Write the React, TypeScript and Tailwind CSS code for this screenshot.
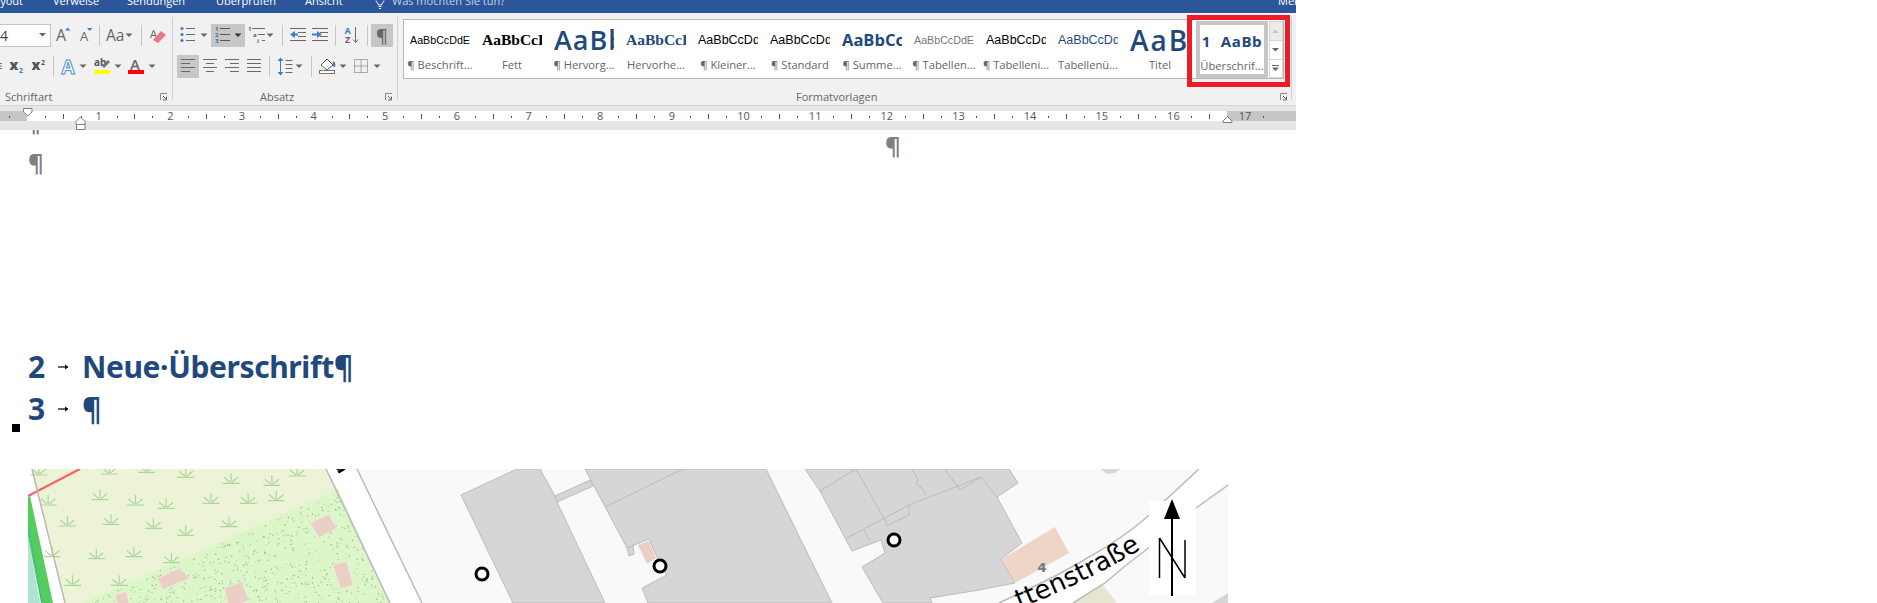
import React from "react";

const GRAY = "#666666";
const BLUE = "#3f7fc1";

function Caret({ x, y = 9.5, c = GRAY }: { x: number; y?: number; c?: string }) {
  return <path d={`M${x - 3.5} ${y}h7l-3.5 3.5z`} fill={c} />;
}

function Ico({ w, children }: { w: number; children?: React.ReactNode }) {
  return (
    <svg width={w} height={23} viewBox={`0 0 ${w} 23`} className="shrink-0 block">
      {children}
    </svg>
  );
}

function Sep() {
  return (
    <div className="w-px h-full flex items-center shrink-0">
      <div className="w-px h-[21px] bg-[#c6c6c6]" />
    </div>
  );
}

function Lines({ rows }: { rows: [number, number][] }) {
  return (
    <g stroke="#6a6a6a" strokeWidth="1">
      {rows.map(([a, b], i) => (
        <path key={i} d={`M${a} ${4.5 + i * 4}H${b}`} />
      ))}
    </g>
  );
}

function Launcher() {
  return (
    <svg width="8" height="8" viewBox="0 0 8 8" className="block shrink-0">
      <path d="M.5 7V.5H7" fill="none" stroke="#8a8a8a" />
      <path d="M3 3l3.5 3.5M6.5 3.5v3.5H3" fill="none" stroke="#666" />
    </svg>
  );
}

function Group({ w, label, pl, pr, children }: { w: string; label: string; pl: string; pr: string; children: React.ReactNode }) {
  return (
    <div className={`${w} shrink-0 flex flex-col`}>
      {children}
      <div className={`h-[17px] flex items-center ${pl} ${pr} text-[11px] leading-[17px] text-[#666666]`}>
        <span>{label}</span>
        <span className="ml-auto">
          <Launcher />
        </span>
      </div>
    </div>
  );
}

const tiles = [
  { p: "AaBbCcDdE", l: "¶ Beschrift...", c: "font-['Liberation_Sans',sans-serif] text-[10.7px] text-black" },
  { p: "AaBbCcDdE", l: "Fett", c: "font-['Liberation_Serif',serif] font-bold text-[15.5px] text-black" },
  { p: "AaBbCc", l: "¶ Hervorg...", c: "font-['Open_Sans',sans-serif] font-semibold text-[27px] tracking-[1px] text-[#1f497d]" },
  { p: "AaBbCcDdE", l: "Hervorhe...", c: "font-['Liberation_Serif',serif] font-bold text-[15.5px] text-[#1f497d]" },
  { p: "AaBbCcDdE", l: "¶ Kleiner...", c: "font-['Liberation_Sans',sans-serif] text-[12.5px] text-black" },
  { p: "AaBbCcDdE", l: "¶ Standard", c: "font-['Liberation_Sans',sans-serif] text-[12.5px] text-black" },
  { p: "AaBbCcDdE", l: "¶ Summe...", c: "font-['Open_Sans',sans-serif] font-bold text-[16.5px] text-[#1f497d]" },
  { p: "AaBbCcDdE", l: "¶ Tabellen...", c: "font-['Liberation_Sans',sans-serif] text-[10.7px] text-[#777777]" },
  { p: "AaBbCcDdE", l: "¶ Tabelleni...", c: "font-['Liberation_Sans',sans-serif] text-[12.5px] text-black" },
  { p: "AaBbCcDdE", l: "Tabellenü...", c: "font-['Liberation_Sans',sans-serif] text-[12.5px] text-[#1f497d]" },
  { p: "AaB", l: "Titel", c: "font-['Open_Sans',sans-serif] font-semibold text-[28px] tracking-[2px] text-[#1f497d]" },
];

function Tile({ t }: { t: (typeof tiles)[number] }) {
  return (
    <div className="w-[72px] shrink-0 flex flex-col items-center">
      <div className="w-[60px] h-[38px] overflow-hidden flex items-center whitespace-nowrap pt-[2px]">
        <span className={`${t.c} leading-[34px]`}>{t.p}</span>
      </div>
      <div className="w-[70px] text-center whitespace-nowrap text-[11.2px] leading-[16px] text-[#666666] mt-[-1px]">{t.l}</div>
    </div>
  );
}

const ticks: number[] = [];
for (let i = -1; i < 70; i++) ticks.push(i);

function Ruler() {
  const step = 71.65 / 4;
  const x0 = 27;
  return (
    <svg width="1296" height="25" viewBox="0 105 1296 25" className="block shrink-0">
      <rect x="0" y="105" width="1296" height="25" fill="#e6e6e6" />
      <rect x="0" y="105" width="1296" height="1" fill="#d4d4d4" />
      <rect x="0" y="111" width="1296" height="10" fill="#c6c6c6" />
      <rect x="27" y="111" width="1200" height="10" fill="#ffffff" />
      {ticks.map((i) => {
        const x = x0 + i * step;
        if (i % 4 === 0) {
          const n = Math.abs(i / 4);
          if (n === 0) return null;
          return (
            <text key={i} x={x} y="120" textAnchor="middle" fontSize="11" fill="#555555" fontFamily="'Open Sans',sans-serif">
              {n}
            </text>
          );
        }
        if (i % 2 === 0) return <rect key={i} x={Math.round(x)} y="114" width="1" height="5" fill="#555555" />;
        return <rect key={i} x={Math.round(x)} y="116" width="1" height="2" fill="#555555" />;
      })}
      <path d="M23.5 108.5h8.5v3.5l-4.2 4-4.3-4z" fill="#fff" stroke="#808080" />
      <path d="M80.5 117l4.5 4.5v3h-9v-3z" fill="#fff" stroke="#808080" />
      <rect x="76.5" y="124.5" width="8.5" height="5" fill="#fff" stroke="#808080" />
      <path d="M1227.5 116.5l4.5 4.5v1.5h-9v-1.5z" fill="#fff" stroke="#808080" />
    </svg>
  );
}

const T = (zx: number, zy: number): [number, number] => [zx / 2.45, 460 + zy / 3];

const tufts: [number, number][] = [
  [95, 45], [268, 42], [359, 37], [455, 52], [566, 70], [666, 76], [728, 48], [677, 122], [608, 130], [517, 130],
  [407, 145], [332, 135], [245, 119], [118, 135], [165, 198], [272, 193], [376, 205], [455, 226], [561, 200],
  [236, 296], [328, 290], [420, 308], [178, 376], [292, 376], [128, 290],
];

function dots() {
  const out: string[] = [];
  let s = 12345;
  const r = () => {
    s = (s * 1103515245 + 12345) & 0x7fffffff;
    return s / 0x7fffffff;
  };
  for (let i = 0; i < 1100; i++) {
    const x = 82 + r() * 310;
    const y = 490 + r() * 113;
    const topEdge = 603 - ((x - 82) / 253) * 112;
    const rightEdge = 339 + ((y - 491) / 112) * 51;
    if (y > topEdge + 2 && x < rightEdge - 3) {
      out.push(`M${x.toFixed(1)} ${y.toFixed(1)}l${(r() * 2.4 - 1.2).toFixed(1)} ${(r() * 2.4 - 1.2).toFixed(1)}`);
    }
  }
  return out.join("");
}

function Ring({ x, y }: { x: number; y: number }) {
  return <circle cx={x} cy={y} r="6" fill="#ffffff" stroke="#000000" strokeWidth="3" />;
}

function MapPic() {
  const b = { fill: "#d6d6d6", stroke: "#bbbbbb", strokeWidth: 1 };
  const p = "#e9cfc4";
  return (
    <svg width="1200" height="134" viewBox="28 469 1200 134" className="block shrink-0 ml-[28px] mt-[39px]">
      <rect x="28" y="469" width="1200" height="134" fill="#f9f9f9" />
      <polygon points="28,469 358,469 423,603 28,603" fill="#ffffff" />
      <polygon points="32,469 326,469 339,491 82,603 65,603" fill="#edf3d7" />
      <polygon points="82,603 335,491 339,491 390,603" fill="#dcf6ca" />
      <path d={dots()} stroke="#84bf88" strokeWidth="1.2" fill="none" />
      <g stroke="#add69a" strokeWidth="1.2" fill="none">
        {tufts.map(([zx, zy], i) => {
          const [x, y] = T(zx, zy);
          return <path key={i} d={`M${x - 8.5} ${y}h17M${x} ${y - 1}v-9M${x - 1} ${y - 1}l-6 -5M${x + 1} ${y - 1}l6 -5`} />;
        })}
      </g>
      <polygon points="28,535 40,603 28,603" fill="#b0e3d2" />
      <polygon points="28,497 30,496 53,603 41,603 28,536" fill="#55cc5e" />
      <path d="M29 530L42 603" stroke="#2aa7d8" strokeWidth="1" strokeDasharray="3 2" fill="none" />
      <path d="M28 496L80 469" stroke="#f76666" strokeWidth="2.4" fill="none" />
      <path d="M32 469L65 603M326 469L390 603M357 469L422 603" stroke="#b9b9b9" strokeWidth="1.5" fill="none" />
      <text x="330" y="472" fontSize="16" fontWeight="700" fontFamily="'DejaVu Sans',sans-serif" fill="#000" transform="rotate(62 338 472)">
        a
      </text>
      {[
        [[760, 190], [805, 162], [825, 205], [782, 232]],
        [[815, 315], [850, 305], [865, 375], [835, 387]],
        [[385, 355], [430, 330], [440, 325], [465, 355], [425, 375], [400, 388]],
        [[550, 385], [592, 365], [610, 420], [575, 440], [560, 440]],
        [[282, 405], [310, 395], [318, 440], [290, 440]],
      ].map((q, i) => (
        <polygon key={i} points={q.map(([a, c]) => T(a, c).join(",")).join(" ")} fill={p} stroke="#f2e6de" strokeWidth="1" />
      ))}
      <polygon points="461,495 517,469 540,469 555,496 557,502 605,603 513,603" {...b} />
      <polygon points="555,496 590,480 593,486 557,502" {...b} />
      <polygon points="585,469 766,469 832,603 648,603 642,588 667,575 657,557 649,539 627,548" {...b} />
      <path d="M605 507L683 469" stroke="#bbbbbb" fill="none" />
      <polygon points="627,548 633,546 634,554 629,556" {...b} />
      <polygon points="638,545 649,541 656,558 647,564" fill={p} />
      <Ring x={482} y={574} />
      <Ring x={660} y={566} />
      <polygon points="805,469 1009,469 1018,483 997,497 1022,543 1001,559 1015,583 979,590 930,598 932,603 883,603 862,567 885,553 881,540 852,551 820,491" {...b} />
      <path
        d="M820 491L856 469M856 469L885 520M847 538L909 505L981 477L997 497M945 469L960 490L981 477M912 469L918 480L916 484L922 488L926 495M864 530L869 540M885 520L887 526L909 515V505"
        stroke="#bbbbbb"
        fill="none"
      />
      <Ring x={894} y={540} />
      <polygon points="1101,469 1120,469 1115,473 1107,474" fill="#d6d6d6" />
      <polygon points="1002,559 1055,527 1069,553 1015,583" fill="#edd5c8" />
      <text x="1042" y="572" textAnchor="middle" fontSize="13" fontWeight="700" fill="#777777" fontFamily="'DejaVu Sans',sans-serif">
        4
      </text>
      <polygon points="1073,603 1102,584 1117,603" fill="#e6e6d0" />
      <polygon points="1212,603 1228,593 1228,603" fill="#d6d6d6" />
      <path d="M999 603Q1060 575 1089 557Q1120 540 1146 518L1199 469H1228V485L1196 508Q1170 530 1146 550Q1125 565 1105 583L1073 603Z" fill="#ffffff" />
      <path d="M999 603Q1060 575 1089 557Q1120 540 1146 518L1199 469M1228 485L1196 508Q1170 530 1146 550Q1125 565 1105 583L1073 603" fill="none" stroke="#bbbbbb" strokeWidth="1.5" />
      <path id="strasse" d="M975 625Q1075 590 1141 549" fill="none" />
      <text fontSize="26" fontFamily="'DejaVu Sans',sans-serif" fill="#000000">
        <textPath href="#strasse" startOffset="100%" textAnchor="end">
          ttenstraße
        </textPath>
      </text>
      <rect x="1149" y="501" width="47" height="94" fill="#ffffff" />
      <path d="M1172 510V596" stroke="#000" strokeWidth="2" fill="none" />
      <polygon points="1172,499 1164,519 1180,519" fill="#000" />
      <path d="M1159.5 538V578M1159.5 538L1185 578M1185 540V578" stroke="#000" strokeWidth="1.5" fill="none" />
    </svg>
  );
}

function Heading({ n, text }: { n: string; text: string }) {
  return (
    <div className="h-[42px] flex items-center pl-[28px] text-[#1f497d] font-['Noto_Sans',sans-serif] font-bold text-[30px] tracking-[-0.4px] leading-[42px]">
      <span className="w-[30px] shrink-0">{n}</span>
      <svg width="25" height="10" viewBox="0 0 25 10" className="block shrink-0">
        <path d="M0 5H8" stroke="#000" strokeWidth="1.2" />
        <path d="M7 2.5L10.5 5L7 7.5z" fill="#000" />
      </svg>
      <span className="ml-[-1px]">{text}</span>
    </div>
  );
}

export default function App() {
  return (
    <div className="relative w-[1877px] h-[603px] bg-white overflow-hidden font-['Open_Sans',sans-serif]">
      <div className="w-[1296px] h-[13px] bg-[#2b579a] overflow-hidden flex items-start gap-[30px] text-white text-[11px] leading-[18px] whitespace-nowrap">
        <div className="w-[23px] shrink-0 flex justify-end mt-[-8px]">
          <span className="shrink-0">Layout</span>
        </div>
        <span className="w-[44px] shrink-0 mt-[-8px]">Verweise</span>
        <span className="w-[59px] shrink-0 mt-[-8px]">Sendungen</span>
        <span className="w-[59px] shrink-0 mt-[-8px]">Überprüfen</span>
        <span className="w-[39px] shrink-0 mt-[-8px]">Ansicht</span>
        <svg width="12" height="13" viewBox="0 0 12 13" className="block shrink-0">
          <path d="M2 0.5c.5 2 2 2.5 2.5 4.5h3C8 3 9.5 2.5 10 .5M4.5 6.5h3M5 8.5h2" stroke="#ffffff" fill="none" />
        </svg>
        <span className="ml-[-24px] w-[130px] shrink-0 mt-[-8px] text-[#c8d3e6]">Was möchten Sie tun?</span>
        <span className="ml-auto w-[18px] shrink-0 overflow-hidden mt-[-8px]">Melden</span>
      </div>

      <div className="w-[1296px] h-[92px] bg-[#f1f1f1] flex">
        <Group w="w-[172px]" label="Schriftart" pl="pl-[5px]" pr="pr-[4px]">
          <div className="flex h-[23px] mt-[11px]">
            <div className="w-[51px] shrink-0 h-[23px] bg-white border border-l-0 border-[#c6c6c6] flex items-center text-[14px] text-[#444444]">
              <span>4</span>
              <svg width="8" height="5" viewBox="0 0 8 5" className="ml-[31px] block">
                <path d="M0 0h7l-3.5 3.5z" fill="#666" />
              </svg>
            </div>
            <Ico w={24}>
              <text x="5" y="17" fontSize="16" fill={GRAY}>A</text>
              <path d="M14 6.5h5.5l-2.75-3z" fill={BLUE} />
            </Ico>
            <Ico w={24}>
              <text x="5" y="17" fontSize="13" fill={GRAY}>A</text>
              <path d="M12 4h5.5l-2.75 3z" fill={BLUE} />
            </Ico>
            <Sep />
            <Ico w={41}>
              <text x="6" y="17" fontSize="15.5" fill={GRAY}>Aa</text>
              <Caret x={29} />
            </Ico>
            <Sep />
            <Ico w={30}>
              <text x="8" y="14" fontSize="11" fill={GRAY}>A</text>
              <polygon points="11,16 19,7 24,11 16,19" fill="#e9778a" />
            </Ico>
          </div>
          <div className="flex h-[23px] mt-[8px] mb-[10px]">
            <Ico w={5}>
              <path d="M0 8.5h2M0 11h2M0 13.5h2" stroke="#777" />
            </Ico>
            <Ico w={22}>
              <text x="4.5" y="15" fontSize="14" fontWeight="800" fill="#555">x</text>
              <text x="14" y="18" fontSize="7" fontWeight="700" fill={BLUE}>2</text>
            </Ico>
            <Ico w={26}>
              <text x="4.5" y="15" fontSize="14" fontWeight="800" fill="#555">x</text>
              <text x="14" y="10" fontSize="7" fontWeight="700" fill="#555">2</text>
            </Ico>
            <Sep />
            <Ico w={37}>
              <text x="7.5" y="19" fontSize="19" fontWeight="700" fill="#ffffff" stroke="#4f8fcc" strokeWidth="1">A</text>
              <Caret x={29} />
            </Ico>
            <Ico w={34}>
              <text x="3" y="11" fontSize="10" fontWeight="700" fill="#555">ab</text>
              <path d="M12 12L18 6" stroke="#777" strokeWidth="3" />
              <rect x="3" y="15" width="16" height="4" fill="#ffff00" />
              <Caret x={27} />
            </Ico>
            <Ico w={47}>
              <text x="5" y="14.5" fontSize="15" fontWeight="600" fill={GRAY}>A</text>
              <rect x="3" y="15" width="16" height="4" fill="#ff0000" />
              <Caret x={27} />
            </Ico>
          </div>
        </Group>
        <div className="w-px h-[83px] mt-[4px] bg-[#d0d0d0] shrink-0" />

        <Group w="w-[224px]" label="Absatz" pl="pl-[87px]" pr="pr-[4px]">
          <div className="flex h-[23px] mt-[11px]">
            <Ico w={38}>
              <g fill={BLUE}>
                <circle cx="9" cy="4.5" r="1.6" />
                <circle cx="9" cy="10.5" r="1.6" />
                <circle cx="9" cy="16.5" r="1.6" />
              </g>
              <path d="M13 4.5h9M13 10.5h9M13 16.5h9" stroke="#6a6a6a" />
              <Caret x={31} />
            </Ico>
            <div className="bg-[#c6c6c6] h-[23px] shrink-0">
              <Ico w={34}>
                <g fontSize="6" fontWeight="700" fill="#2b6cb0">
                  <text x="4" y="7">1</text>
                  <text x="4" y="13">2</text>
                  <text x="4" y="19">3</text>
                </g>
                <path d="M9 4.5h10M9 10.5h10M9 16.5h10" stroke="#555" />
                <Caret x={27} c="#333333" />
              </Ico>
            </div>
            <Ico w={37}>
              <g fontSize="6" fontWeight="700" fill="#2b6cb0">
                <text x="3" y="7">1</text>
                <text x="8" y="13">a</text>
                <text x="12" y="19">i</text>
              </g>
              <path d="M7 4.5h13M13 10.5h7M17 16.5h3" stroke="#6a6a6a" />
              <Caret x={25} />
            </Ico>
            <Sep />
            <Ico w={26}>
              <path d="M7 4.5h16M15 8.5h8M15 12.5h8M7 16.5h16" stroke="#6a6a6a" />
              <path d="M15 10.5H11" stroke={BLUE} strokeWidth="2" />
              <path d="M12 7v7l-5-3.5z" fill={BLUE} />
            </Ico>
            <Ico w={26}>
              <path d="M3 4.5h16M11 8.5h8M11 12.5h8M3 16.5h16" stroke="#6a6a6a" />
              <path d="M3 10.5H8" stroke={BLUE} strokeWidth="2" />
              <path d="M8 7v7l5-3.5z" fill={BLUE} />
            </Ico>
            <Sep />
            <Ico w={31}>
              <text x="8.5" y="9.5" fontSize="9" fontWeight="700" fill={BLUE}>A</text>
              <text x="9" y="18.5" fontSize="9" fontWeight="700" fill="#7a4fa3">Z</text>
              <path d="M19.5 3v15M17 15.5l2.5 3l2.5-3" stroke="#6a6a6a" fill="none" />
            </Ico>
            <Sep />
            <div className="w-[3px] shrink-0" />
            <div className="bg-[#c6c6c6] w-[22px] h-[23px] shrink-0 flex items-center justify-center text-[#666666] text-[18px] font-semibold leading-none">¶</div>
          </div>
          <div className="flex h-[23px] mt-[8px] mb-[10px]">
            <div className="w-[4px] shrink-0" />
            <div className="bg-[#c6c6c6] h-[23px] shrink-0">
              <Ico w={22}>
                <Lines rows={[[4, 18], [4, 13], [4, 18], [4, 13]]} />
              </Ico>
            </div>
            <Ico w={22}>
              <Lines rows={[[4, 18], [7, 15], [4, 18], [7, 15]]} />
            </Ico>
            <Ico w={22}>
              <Lines rows={[[4, 18], [9, 18], [4, 18], [9, 18]]} />
            </Ico>
            <Ico w={22}>
              <Lines rows={[[4, 18], [4, 18], [4, 18], [4, 18]]} />
            </Ico>
            <div className="w-[4px] shrink-0" />
            <Sep />
            <Ico w={41}>
              <path d="M10.5 5v13" stroke={BLUE} />
              <path d="M7.5 6l3-3.5l3 3.5zM7.5 17l3 3.5l3-3.5z" fill={BLUE} />
              <path d="M15.5 5.5h7M15.5 9.5h7M15.5 13.5h7M15.5 17.5h7" stroke="#6a6a6a" />
              <Caret x={29} />
            </Ico>
            <Sep />
            <Ico w={37}>
              <path d="M9 10l6-6l6 6l-6 5z" fill="#ffffff" stroke="#555" />
              <path d="M21 6c2 1 3 3 2 6c-2 0-3-2-2-6z" fill={BLUE} />
              <rect x="7.5" y="15.5" width="15" height="3" fill="#ffffff" stroke="#777" />
              <Caret x={31} />
            </Ico>
            <Ico w={41}>
              <rect x="5.5" y="4.5" width="13" height="13" fill="none" stroke="#666" strokeDasharray="1 1" />
              <path d="M5.5 11h13M12 4.5v13" stroke="#666" strokeDasharray="1 1" />
              <Caret x={28} />
            </Ico>
          </div>
        </Group>
        <div className="w-px h-[83px] mt-[4px] bg-[#d0d0d0] shrink-0" />

        <Group w="w-[893px]" label="Formatvorlagen" pl="pl-[398px]" pr="pr-[3px]">
          <div className="h-[60px] mt-[6px] ml-[5px] w-[881px] bg-white border border-[#b8b8b8] flex">
            {tiles.map((t) => (
              <Tile key={t.l} t={t} />
            ))}
            <div className="w-[72px] h-[57px] mt-px shrink-0 border-[4px] border-[#c6c6c6] flex flex-col items-center overflow-hidden">
              <div className="h-[33px] flex items-center whitespace-nowrap text-[15px] tracking-[0.6px] font-bold text-[#1f497d] leading-none">
                <span className="w-[19px]">1</span>
                <span>AaBb</span>
              </div>
              <div className="whitespace-nowrap text-[11.2px] leading-[16px] text-[#666666]">Überschrif...</div>
            </div>
            <div className="w-[14px] ml-[1px] mt-px shrink-0 flex flex-col">
              <div className="h-[20px] bg-[#ebebeb] border border-[#d5d5d5] flex items-center justify-center">
                <svg width="8" height="5" viewBox="0 0 8 5" className="block"><path d="M0 4h7L3.5 .5z" fill="#c6c6c6" /></svg>
              </div>
              <div className="h-[19px] border-x border-b border-[#d5d5d5] flex items-center justify-center">
                <svg width="8" height="5" viewBox="0 0 8 5" className="block"><path d="M0 0h7L3.5 3.5z" fill="#666" /></svg>
              </div>
              <div className="h-[18px] border-x border-b border-[#d5d5d5] flex items-center justify-center">
                <svg width="8" height="7" viewBox="0 0 8 7" className="block"><path d="M0 .5h7" stroke="#666" /><path d="M0 2.5h7L3.5 6z" fill="#666" /></svg>
              </div>
            </div>
          </div>
          <div className="h-[9px] shrink-0" />
        </Group>
        <div className="w-px h-[83px] mt-[4px] bg-[#d0d0d0] shrink-0" />
      </div>

      <Ruler />

      <div className="h-[216px] flex pl-[28px] text-[#808080] font-['Noto_Sans',sans-serif] font-bold text-[24px] leading-[24px]">
        <div className="w-[857px] shrink-0 flex flex-col">
          <div className="h-[7px] overflow-hidden relative">
            <div className="mt-[-19px] ml-[-3px]">¶</div>
          </div>
          <div className="mt-[14px]">¶</div>
        </div>
        <div className="mt-[4px]">¶</div>
      </div>

      <Heading n="2" text="Neue·Überschrift¶" />
      <Heading n="3" text="¶" />
      <MapPic />

      <div className="absolute left-[12px] top-[424px] w-[8px] h-[8px] bg-black" />
      <div className="absolute left-[1187px] top-[15px] w-[103px] h-[72px] border-[5px] border-[#ed1c24]" />
    </div>
  );
}
